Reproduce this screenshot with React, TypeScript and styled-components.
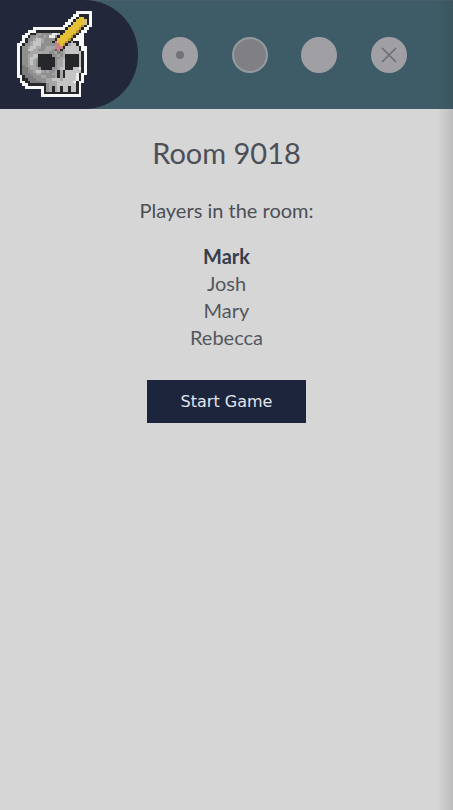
import React from "react";
import styled, { createGlobalStyle } from "styled-components";

const GlobalStyle = createGlobalStyle`
  * { box-sizing: border-box; }
  html, body { margin: 0; background: #d6d6d7; }
  body { font-family: Lato, "Open Sans", sans-serif; color: #4c4f56; }
`;

const Page = styled.div`
  position: relative;
  display: flex;
  flex-direction: column;
  min-height: 100vh;
  background: #d6d6d7;
`;

const EdgeShade = styled.div`
  position: absolute;
  top: 0;
  right: 0;
  bottom: 0;
  width: 16px;
  pointer-events: none;
  background: linear-gradient(to right, rgba(50, 50, 50, 0), rgba(50, 50, 50, 0.16));
`;

const Header = styled.header`
  display: flex;
  height: 109px;
  background: #3d5c67;
  border-top: 1px solid #4a5f68;
`;

const LogoPanel = styled.div`
  flex: none;
  width: 138px;
  margin-top: -1px;
  padding: 11px 0 0 17px;
  background: #22283a;
  border-radius: 0 54px 54px 0;
`;

const Tools = styled.nav`
  flex: 1;
  display: flex;
  align-items: center;
  justify-content: space-between;
  padding: 0 46px 0 24px;
`;

const Tool = styled.button<{ $fill: string; $ring?: string }>`
  display: flex;
  align-items: center;
  justify-content: center;
  width: 36px;
  height: 36px;
  padding: 0;
  border: 2px solid ${(p) => p.$ring ?? p.$fill};
  border-radius: 50%;
  background: ${(p) => p.$fill};
  cursor: pointer;
`;

const Dot = styled.span`
  width: 8px;
  height: 8px;
  border-radius: 50%;
  background: #727175;
`;

const Main = styled.main`
  display: flex;
  flex-direction: column;
  align-items: center;
  padding: 24px 16px;
  text-align: center;
`;

const Title = styled.h1`
  margin: 0;
  font-size: 29px;
  line-height: 40px;
  font-weight: 400;
`;

const Subtitle = styled.p`
  margin: 24px 0 19px;
  font-size: 20px;
  line-height: 27px;
`;

const Players = styled.ul`
  margin: 0;
  padding: 0;
  list-style: none;
`;

const Player = styled.li<{ $self?: boolean }>`
  font-size: 20px;
  line-height: 27px;
  font-weight: ${(p) => (p.$self ? 700 : 400)};
  color: ${(p) => (p.$self ? "#363d4a" : "#54575d")};
`;

const StartButton = styled.button`
  margin-top: 29px;
  padding: 0 34px;
  border: 0;
  background: #1d253d;
  color: #e2e5ec;
  font-family: "DejaVu Sans", Verdana, sans-serif;
  font-size: 16px;
  line-height: 43px;
  cursor: pointer;
`;

const palette: Record<string, string> = {
  W: "#f8f8f8",
  K: "#26272b",
  d: "#7c7c7e",
  a: "#8f8f90",
  b: "#a6a6a7",
  c: "#c4c4c5",
  w: "#ececec",
  Y: "#e5c136",
  O: "#ba9434",
  t: "#d8bd7c",
  P: "#c98286",
  p: "#875053",
};

const sprite = [
  "......................WWWWWW",
  ".....................WWKKKKW",
  "....................WWKYYKKW",
  "...................WWKYYYtKW",
  "..................WWKYYYYtKW",
  ".................WWKYYYYOKWW",
  "......WWWWWWWWWWWWKYYYYOKWW.",
  "....WWWKKKKKKKKKKKYYYYOKWW..",
  "...WWKKabaaaawwcKYYYYOKWW...",
  "..WWKaabaabawwaKYYYYOKWWW...",
  "..WKaabccbaaaaKYYYYOKWWWW...",
  ".WWKabcccbaaaKPYYYOKbKKWW...",
  "WWKaabcccaaaaaPPYOKbccKWW...",
  "WKaabccbbaabbbPPPKcccccKWW..",
  "WKaaccbbaabbbapPKbcccccKWW..",
  "WKaaabbbbbbbaabdabccccccKW..",
  "WKaabbccKKKKKaababKKKKKcKW..",
  "WKaabccbKKKKKKaabbKKKKKcKW..",
  "WKaabcbaKKKKKKabbcKKKKKcKW..",
  "WKaabcbaKKKKKKabbcKKKKKcKW..",
  "WKdabbbaKKKKKKabbcKKKKKcKW..",
  "WKddabbbaKKKKaabccKKKccwKW..",
  "WKddaabccbabaabKbKccccccKW..",
  "WKdddaabbaaaabbKbKccccwKWW..",
  "WWKdddaaabbaaabKbKccccwKW...",
  ".WKKdddaaaabbcccbcccccwKW...",
  ".WWKKddddaabbbbccccccwKWW...",
  "..WWKKKKKKKabbbcccccccKW....",
  "...WWWWWWWKabKbcKccKccKW....",
  ".........WKabKbcKccKccKW....",
  ".........WKKKKKKKKKKKKKW....",
  ".........WWWWWWWWWWWWWWW....",
];

function SkullLogo() {
  return (
    <svg width="75" height="86" viewBox="0 0 28 32" shapeRendering="crispEdges" role="img" aria-label="Skull with pencil">
      {sprite.flatMap((row, y) =>
        Array.from(row.matchAll(/([^.])\1*/g)).map((run) => (
          <rect key={`${y}-${run.index}`} x={run.index} y={y} width={run[0].length} height={1} fill={palette[run[1]]} />
        )),
      )}
    </svg>
  );
}

const players = ["Mark", "Josh", "Mary", "Rebecca"];

export default function App() {
  return (
    <>
      <GlobalStyle />
      <Page>
        <Header>
          <LogoPanel>
            <SkullLogo />
          </LogoPanel>
          <Tools aria-label="Drawing tools">
            <Tool type="button" aria-label="Brush size" $fill="#a09fa3">
              <Dot />
            </Tool>
            <Tool type="button" aria-label="Gray" $fill="#807f83" $ring="#939ba0" />
            <Tool type="button" aria-label="Light" $fill="#a09fa3" />
            <Tool type="button" aria-label="Clear" $fill="#a09fa3">
              <svg width="16" height="16" viewBox="0 0 16 16" fill="none" stroke="#6b6b70" strokeWidth="1.5">
                <path d="M1 1 15 15M15 1 1 15" />
              </svg>
            </Tool>
          </Tools>
        </Header>
        <Main>
          <Title>Room 9018</Title>
          <Subtitle>Players in the room:</Subtitle>
          <Players>
            {players.map((name, i) => (
              <Player key={name} $self={i === 0}>
                {name}
              </Player>
            ))}
          </Players>
          <StartButton type="button">Start Game</StartButton>
        </Main>
        <EdgeShade />
      </Page>
    </>
  );
}
